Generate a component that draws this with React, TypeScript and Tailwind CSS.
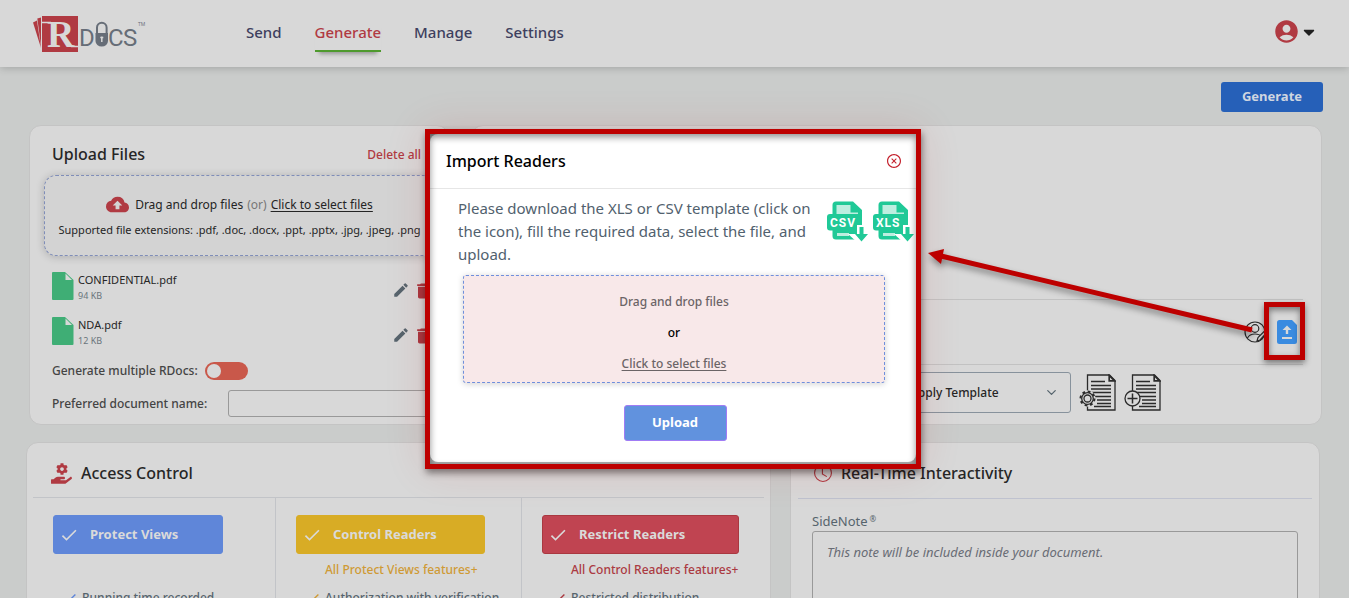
import React from "react";
import { FaCaretDown, FaCog, FaHandHolding } from "react-icons/fa";
import { MdAccountCircle, MdCheck, MdCloudUpload, MdDelete, MdEdit } from "react-icons/md";
import { FiChevronDown } from "react-icons/fi";
import { BsClock } from "react-icons/bs";
import { AiOutlineCloseCircle } from "react-icons/ai";

const navItems = ["Send", "Generate", "Manage", "Settings"];

const files = [
  { name: "CONFIDENTIAL.pdf", size: "94 KB" },
  { name: "NDA.pdf", size: "12 KB" },
];

const plans = [
  {
    title: "Protect Views",
    button: "w-[170px] bg-[#5f86d9] border-[#5f86d9]",
    note: "",
    accent: "text-[#5f86d9]",
    feature: "Running time recorded",
  },
  {
    title: "Control Readers",
    button: "w-[189px] bg-[#d8ac25] border-[#d8ac25]",
    note: "All Protect Views features+",
    accent: "text-[#cf9a35]",
    feature: "Authorization with verification",
  },
  {
    title: "Restrict Readers",
    button: "w-[197px] bg-[#c04451] border-[#a93840]",
    note: "All Control Readers features+",
    accent: "text-[#ab3a42]",
    feature: "Restricted distribution",
  },
];

function Logo() {
  return (
    <svg width="116" height="48" viewBox="0 -5 116 48" role="img" aria-label="RDocs">
      <path d="M0 7.500 4 5.500 8 33Z" fill="#b03a42" />
      <path d="M4.300 3.500 8 2.500V31Z" fill="#b03a42" />
      <rect x="9" y="1" width="36" height="36" fill="#b03a42" />
      <path d="M9 7.500H18M38 31.500H45" stroke="#d8d8d8" strokeWidth="1.500" />
      <text x="14" y="32" fontSize="38" fontWeight="700" fill="#d8d8d8" fontFamily="Liberation Serif, serif">
        R
      </text>
      <g fontSize="24" fill="#666d77" fontFamily="Roboto, sans-serif">
        <text x="46" y="31">D</text>
        <text x="75" y="31">C</text>
        <text x="90" y="31">S</text>
      </g>
      <path d="M64 19V12.500a4.800 4.800 0 0 1 9.600 0V19" fill="none" stroke="#666d77" strokeWidth="2" />
      <path d="M62.500 18H75V26a6.200 5.500 0 0 1-12.500 0Z" fill="#666d77" />
      <path d="M68.800 21.500v5.500M67.300 22.500h3" stroke="#d8d8d8" strokeWidth="1.500" />
      <text x="105" y="11" fontSize="5" fill="#666d77" fontFamily="Open Sans, sans-serif">
        TM
      </text>
    </svg>
  );
}

function FileIcon() {
  return (
    <svg width="22" height="28" viewBox="0 0 22 28">
      <path d="M1 0h12l8.500 8v19a1 1 0 0 1-1 1H1a1 1 0 0 1-1-1V1a1 1 0 0 1 1-1Z" fill="#3fae75" />
      <path d="M13.500 1.500v6.500h6.500Z" fill="#d8d8d8" />
    </svg>
  );
}

function ReaderIcon() {
  return (
    <svg width="22" height="22" viewBox="0 0 22 22" fill="none" stroke="#2b2b2b" strokeWidth="1.200">
      <circle cx="11" cy="11" r="10" />
      <circle cx="11" cy="7.500" r="3.800" />
      <path d="M3.500 17c1.500-3 4-4 7.500-4s5 .8 6.500 2.500" />
      <path d="m13 20 1-3.500 6-6 2 2-6 6.500Z" fill="#d8d8d8" />
    </svg>
  );
}

function UploadFileIcon() {
  return (
    <svg width="20" height="24" viewBox="0 0 20 24">
      <path d="M2.500 0H15l5 5v16.500a2.500 2.500 0 0 1-2.500 2.500h-15A2.500 2.500 0 0 1 0 21.500v-19A2.500 2.500 0 0 1 2.500 0Z" fill="#3a8be0" />
      <path d="M10 5.500 14.500 10H11.200v4H8.800v-4H5.500ZM5 17h10v2H5Z" fill="#d8d8d8" />
    </svg>
  );
}

function TemplateIcon({ kind }: { kind: "settings" | "add" }) {
  return (
    <svg width="37" height="37" viewBox="0 0 37 37" fill="none" stroke="#2b2b2b" strokeWidth="1.300">
      <path d="M8.500 1h22l5.500 5.500V36H8.500Z" />
      <path d="M30 1v6h6Z" fill="#2b2b2b" />
      <path d="M31 3.500v2.500h2.500Z" fill="#d8d8d8" stroke="none" />
      <path d="M12 7.500h14M12 11.500h20M12 15h20M12 18.500h20M15 22.500h17M18 26h14M18 29.500h14M15 32.500h17" strokeWidth="1.500" />
      {kind === "add" ? (
        <>
          <circle cx="8.500" cy="24.500" r="7.500" fill="#d8d8d8" />
          <path d="M8.500 19.500v10M3.500 24.500h10" strokeWidth="1.500" />
        </>
      ) : (
        <>
          <circle cx="8.500" cy="24.500" r="8.200" fill="#d8d8d8" stroke="none" />
          <circle cx="8.500" cy="24.500" r="7" strokeWidth="2" strokeDasharray="2.750" />
          <circle cx="8.500" cy="24.500" r="5.800" />
          <circle cx="8.500" cy="24.500" r="3.500" />
        </>
      )}
    </svg>
  );
}

function SheetIcon({ label }: { label: string }) {
  return (
    <svg width="42" height="42" viewBox="0 0 42 42">
      <path d="M9 .5h17l9 8.500V36a3 3 0 0 1-3 2.500H9A3.500 3.500 0 0 1 5.500 35V4A3.500 3.500 0 0 1 9 .5Z" fill="#20c997" />
      <path d="M9.500 4h14v7.500H31V13H9.500Z" fill="#bdeee0" />
      <path d="M10 32h12v3H10Z" fill="#bdeee0" />
      <rect x="0" y="13" width="35" height="16.500" rx="3" fill="#20c997" />
      <path d="M30 24h10v7h2v3l-8 8h-3L21 33h9Z" fill="#fff" />
      <path d="M32.500 26h4v7h4.500L34.500 40.500 28 33h4.500Z" fill="#20c997" />
      <text x="3" y="26" fontSize="12" fontWeight="700" letterSpacing="1" fill="#fff" fontFamily="Roboto, sans-serif">
        {label}
      </text>
    </svg>
  );
}

function Header() {
  return (
    <header className="relative flex h-[67px] items-center bg-[#d8d8d8] pl-[33px] pr-[31px] shadow-[0_1px_8px_rgba(0,0,0,0.2)]">
      <a href="#home" className="mr-[97px]">
        <Logo />
      </a>
      <nav className="flex gap-[33px] text-[15px] leading-[22px] font-medium text-[#3e3f5e]">
        {navItems.map((item) => (
          <a
            key={item}
            href="#nav"
            className={
              item === "Generate"
                ? "border-b-2 border-[#4f9a2e] pt-[5px] pb-[7px] text-[#b03a42] shadow-[0_6px_4px_-4px_rgba(0,0,0,0.3)]"
                : "border-b-2 border-transparent pt-[5px] pb-[7px]"
            }
          >
            {item}
          </a>
        ))}
      </nav>
      <button aria-label="Account" className="ml-auto flex items-center pb-1">
        <MdAccountCircle className="size-[27px] text-[#b03a42]" />
        <FaCaretDown className="size-[18px] text-[#1f1f1f]" />
      </button>
    </header>
  );
}

function UploadCard() {
  return (
    <section className="h-[300px] w-[420px] rounded-xl border border-[#c4c4c4] bg-[#d8d8d8] pt-[17px] pr-[2px] pl-[14px]">
      <div className="flex items-center justify-between pl-2">
        <h2 className="text-[16px] leading-[23px] font-medium text-[#262626]">Upload Files</h2>
        <button className="flex items-center gap-2 text-[12px] leading-5 font-medium text-[#b03a42]">
          Delete all
          <MdDelete className="size-[17px]" />
        </button>
      </div>
      <div className="mt-[9px] flex h-[81px] w-[391px] flex-col items-center justify-center gap-[6px] rounded-xl border border-dashed border-[#7f8db8] bg-[#d3d3d3] text-[#242424] shadow-[0_1px_8px_rgba(0,0,0,0.2)]">
        <div className="flex items-center text-[12px] leading-5">
          <MdCloudUpload className="mr-[6px] size-[23px] text-[#b03a42]" />
          Drag and drop files
          <span className="mx-1 text-[#777]">(or)</span>
          <a href="#select" className="underline underline-offset-2">
            Click to select files
          </a>
        </div>
        <p className="text-[11px] leading-[16px]">
          Supported file extensions: .pdf, .doc, .docx, .ppt, .pptx, .jpg, .jpeg, .png
        </p>
      </div>
      <ul className="mt-4 pr-[13px] pl-2">
        {files.map((file) => (
          <li key={file.name} className="flex h-[45px] items-start">
            <FileIcon />
            <div className="ml-1 text-[11px] leading-[16px] text-[#262626]">
              {file.name}
              <p className="text-[9px] leading-[16px] text-[#6a757c]">{file.size}</p>
            </div>
            <button aria-label="Rename" className="mt-[9px] ml-auto">
              <MdEdit className="size-[18px] text-[#56646d]" />
            </button>
            <button aria-label="Delete" className="mt-[9px] ml-[3px]">
              <MdDelete className="size-5 text-[#a93840]" />
            </button>
          </li>
        ))}
      </ul>
      <div className="flex items-center gap-[7px] pl-2 text-[12px] leading-4 font-medium text-[#444]">
        <label htmlFor="multiple">Generate multiple RDocs:</label>
        <span className="relative h-[18px] w-[43px]">
          <input id="multiple" type="checkbox" className="block h-[18px] w-[43px] appearance-none rounded-full bg-[#c9584a]" />
          <span className="pointer-events-none absolute top-[2px] left-[2px] size-[14px] rounded-full bg-[#d8d8d8]" />
        </span>
      </div>
      <div className="mt-[10px] flex items-center justify-between pr-[10px] pl-2 text-[12px] font-medium text-[#444]">
        <label htmlFor="docname">Preferred document name:</label>
        <input id="docname" className="h-[27px] w-[208px] rounded-[3px] border border-[#999] px-2" />
      </div>
    </section>
  );
}

function ReadersCard() {
  return (
    <section className="flex h-[300px] flex-1 flex-col rounded-xl border border-[#c4c4c4] bg-[#d8d8d8] px-[18px]">
      <div className="h-[174px] border-b border-[#c2c2c2]" />
      <div className="flex h-[65px] items-center justify-end gap-[11px] border-b border-[#c2c2c2] pr-[6px]">
        <button aria-label="Choose reader">
          <ReaderIcon />
        </button>
        <div className="relative">
          <button aria-label="Import readers" className="block">
            <UploadFileIcon />
          </button>
          <Callout />
        </div>
      </div>
      <div className="mt-[7px] flex items-center justify-end gap-2 pr-[142px]">
        <div className="relative">
          <select
            aria-label="Apply Template"
            className="h-[41px] w-[171px] appearance-none rounded-[3px] border border-[#87929c] pl-[9px] text-[12px] font-medium text-[#262626]"
          >
            <option>Apply Template</option>
          </select>
          <FiChevronDown className="pointer-events-none absolute top-[13px] right-[12px] size-[15px] text-[#56646d]" />
        </div>
        <button aria-label="Template settings">
          <TemplateIcon kind="settings" />
        </button>
        <button aria-label="Add template">
          <TemplateIcon kind="add" />
        </button>
      </div>
    </section>
  );
}

// Red box round the import button, with the arrow that leads to the dialog
function Callout() {
  return (
    <>
      <span className="pointer-events-none absolute -top-[18px] -left-[13px] z-30 h-[58px] w-[41px] border-5 border-[#bd0000] shadow-[0_3px_6px_rgba(0,0,0,0.45),inset_0_3px_6px_rgba(0,0,0,0.45)]" />
      <svg
        width="330"
        height="90"
        viewBox="0 0 330 90"
        className="pointer-events-none absolute right-[42px] bottom-[6px] z-30 drop-shadow-[1px_4px_3px_rgba(0,0,0,0.4)]"
      >
        <path d="M327 82 16 8" stroke="#bd0000" strokeWidth="5" fill="none" />
        <path d="M3 5 19 1 16 16Z" fill="#bd0000" />
      </svg>
    </>
  );
}

function AccessCard() {
  return (
    <section className="w-[745px] rounded-xl border border-[#c4c4c4] bg-[#d8d8d8] px-[6px]">
      <h2 className="flex h-[55px] items-center border-b border-[#c2c4c8] pt-[6px] pl-[18px] text-[16px] font-medium text-[#262626]">
        <svg width="21" height="21" viewBox="0 0 21 21" className="mr-[9px] text-[#b03a42]">
          <FaCog x="5" y="0" size="12" />
          <FaHandHolding x="0" y="1" size="21" />
        </svg>
        Access Control
      </h2>
      <div className="grid grid-cols-[243px_246px_1fr] divide-x divide-[#c2c4c8]">
        {plans.map((plan) => (
          <div key={plan.title} className="pt-[17px] pl-5">
            <div className={plan.button + " mb-[6px] rounded-[3px] border"}>
              <button className="flex h-[37px] w-full items-center gap-[11px] pl-[5px] text-[13px] font-bold text-[#dadada]">
                <MdCheck className="size-5" />
                {plan.title}
              </button>
            </div>
            <p className={plan.accent + " h-5 pl-[29px] text-[12px] leading-5 font-medium"}>{plan.note}</p>
            <p className="mt-2 flex items-center gap-1 pl-[8px] text-[12px] leading-5 font-medium text-[#56646d]">
              <MdCheck className={plan.accent + " size-[17px]"} />
              {plan.feature}
            </p>
          </div>
        ))}
      </div>
    </section>
  );
}

function InteractivityCard() {
  return (
    <section className="flex-1 rounded-xl border border-[#c4c4c4] bg-[#d8d8d8] px-[7px]">
      <h2 className="flex h-[56px] items-center border-b border-[#bfc2cf] pt-[5px] pl-4 text-[16px] font-medium text-[#262626]">
        <BsClock className="mr-[9px] size-[18px] text-[#b03a42]" />
        Real-Time Interactivity
      </h2>
      <div className="px-[14px] pt-[12px]">
        <label htmlFor="sidenote" className="block text-[13px] leading-5 text-[#56646d]">
          SideNote<sup className="ml-[2px] text-[8px]">®</sup>
        </label>
        <textarea
          id="sidenote"
          placeholder="This note will be included inside your document."
          className="block h-[120px] w-full resize-none rounded-[3px] border border-[#999] px-[14px] py-[11px] text-[13px] italic placeholder:text-[#686c75]"
        />
      </div>
    </section>
  );
}

function ImportDialog() {
  return (
    <div className="pointer-events-none absolute inset-0 z-20 flex items-start justify-center pt-[129px] pr-[3px]">
      <div className="pointer-events-auto relative w-[496px] bg-[#aaa] p-[5px] shadow-[0_0_40px_rgba(190,0,0,0.12),1px_4px_7px_rgba(0,0,0,0.45)]">
        <div role="dialog" aria-label="Import Readers" className="mb-[2px] h-[328px] rounded-tl-lg rounded-b-lg bg-white">
          <div className="flex h-[55px] items-center justify-between border-b border-[#e6e6e6] pr-[14px] pl-4">
            <h2 className="text-[16px] font-medium text-black">Import Readers</h2>
            <button aria-label="Close" className="text-[#c4202c]">
              <AiOutlineCloseCircle className="size-4" />
            </button>
          </div>
          <div className="flex h-[86px] items-start justify-between pt-2 pr-[1px] pl-[28px]">
            <p className="w-[364px] text-[15px] leading-[23px] text-[#51616e]">
              Please download the XLS or CSV template (click on the icon), fill the required data, select the file, and
              upload.
            </p>
            <div className="flex gap-1 pt-1">
              <a href="#csv" aria-label="CSV template">
                <SheetIcon label="CSV" />
              </a>
              <a href="#xls" aria-label="XLS template">
                <SheetIcon label="XLS" />
              </a>
            </div>
          </div>
          <div className="mr-[31px] ml-[33px] flex h-[108px] flex-col items-center justify-center gap-[11px] rounded-[3px] border border-dashed border-[#6f8fdc] bg-[#f8e8e9] pt-2 text-[12px] leading-5 font-medium text-[#6b6466] shadow-[0_1px_6px_rgba(0,0,0,0.18)]">
            <p>Drag and drop files</p>
            <p className="text-black">or</p>
            <a href="#import" className="underline underline-offset-2">
              Click to select files
            </a>
          </div>
          <div className="mt-[22px] flex justify-center pl-1">
            <button className="h-9 w-[103px] rounded-[3px] border border-[#a07cf5] bg-[#6192de] text-[13px] font-bold text-white">
              Upload
            </button>
          </div>
        </div>
        <div className="pointer-events-none absolute inset-0 border-5 border-[#bd0000] shadow-[inset_0_3px_7px_rgba(0,0,0,0.45)]" />
      </div>
    </div>
  );
}

export default function App() {
  return (
    <div className="relative h-screen overflow-hidden bg-[#cacccb] font-['Noto_Sans','Open_Sans',sans-serif]">
      <Header />
      <main className="pt-[15px]">
        <div className="flex justify-end pr-[26px]">
          <button className="h-[30px] w-[102px] rounded-[3px] bg-[#2660b8] text-[13px] font-bold text-[#cfd6e0]">
            Generate
          </button>
        </div>
        <div className="mt-[13px] flex gap-[22px] pr-[27px] pl-[29px]">
          <UploadCard />
          <ReadersCard />
        </div>
        <div className="mt-[17px] flex gap-[19px] pr-[29px] pl-[26px]">
          <AccessCard />
          <InteractivityCard />
        </div>
      </main>
      <ImportDialog />
    </div>
  );
}
